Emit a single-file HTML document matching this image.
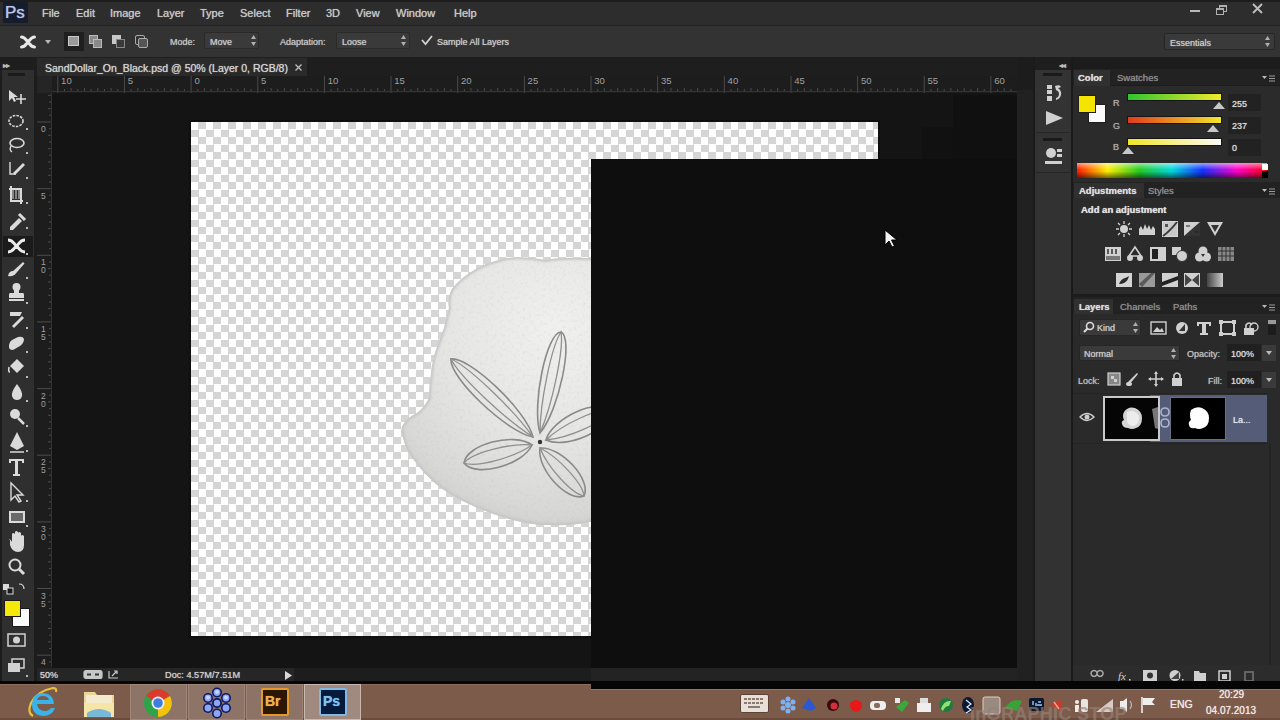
<!DOCTYPE html>
<html><head><meta charset="utf-8">
<style>
*{margin:0;padding:0;box-sizing:border-box}
html,body{width:1280px;height:720px;overflow:hidden;background:#1c1c1c;font-family:"Liberation Sans",sans-serif;color:#c4c4c4}
.a{position:absolute}
.t{position:absolute;white-space:nowrap;font-size:11px;line-height:12px;text-shadow:0 0 0.8px currentColor}
#wrap{position:absolute;left:0;top:0;width:1280px;height:720px;overflow:hidden}
</style></head><body><div id="wrap">
<!-- menu bar -->
<div class="a" style="left:0;top:0;width:1280px;height:2px;background:#1d1d1d"></div>
<div class="a" id="menubar" style="left:0;top:2px;width:1280px;height:23px;background:#2d2d2d"></div>
<div class="a" style="left:0;top:25px;width:1280px;height:1px;background:#232323"></div>
<!-- options bar -->
<div class="a" id="optbar" style="left:0;top:26px;width:1280px;height:31px;background:#333333"></div>

<!-- PS logo and menu -->
<div class="a" style="left:3px;top:2px;width:25px;height:21px;background:#151c2c"></div>
<div class="t" style="left:5px;top:3px;font-size:17px;line-height:19px;color:#b4c4ec;letter-spacing:0px">Ps</div>
<div class="t" style="left:42px;top:7px;font-size:11px;color:#c6c6c6">File</div>
<div class="t" style="left:76px;top:7px;font-size:11px;color:#c6c6c6">Edit</div>
<div class="t" style="left:110px;top:7px;font-size:11px;color:#c6c6c6">Image</div>
<div class="t" style="left:157px;top:7px;font-size:11px;color:#c6c6c6">Layer</div>
<div class="t" style="left:200px;top:7px;font-size:11px;color:#c6c6c6">Type</div>
<div class="t" style="left:240px;top:7px;font-size:11px;color:#c6c6c6">Select</div>
<div class="t" style="left:286px;top:7px;font-size:11px;color:#c6c6c6">Filter</div>
<div class="t" style="left:326px;top:7px;font-size:11px;color:#c6c6c6">3D</div>
<div class="t" style="left:356px;top:7px;font-size:11px;color:#c6c6c6">View</div>
<div class="t" style="left:396px;top:7px;font-size:11px;color:#c6c6c6">Window</div>
<div class="t" style="left:454px;top:7px;font-size:11px;color:#c6c6c6">Help</div>
<!-- window controls -->
<div class="a" style="left:1190px;top:10px;width:10px;height:2px;background:#b8b8b8"></div>
<div class="a" style="left:1219px;top:5px;width:8px;height:7px;border:1px solid #b0b0b0;border-top-width:2px"></div>
<div class="a" style="left:1216px;top:8px;width:8px;height:7px;border:1px solid #b0b0b0;border-top-width:2px;background:#2d2d2d"></div>
<svg class="a" style="left:1252px;top:3px" width="11" height="11"><path d="M1 1L10 10M10 1L1 10" stroke="#bdbdbd" stroke-width="1.9"/></svg>

<!-- options bar content -->
<svg class="a" style="left:19px;top:34px" width="18" height="16" viewBox="0 0 18 16"><path d="M2.5 3 C6 3 7 6 9 8 C11 10 12 13 15.5 13 M2.5 13 C6 13 7 10 9 8 C11 6 12 3 15.5 3" stroke="#e8e8e8" stroke-width="3" fill="none" stroke-linecap="round"/></svg>
<svg class="a" style="left:45px;top:40px" width="6" height="4"><path d="M0 0H6L3 4Z" fill="#b8b8b8"/></svg>

<div class="a" style="left:64px;top:32px;width:20px;height:19px;background:#1f1f1f"></div>
<div class="a" style="left:68px;top:36px;width:11px;height:10px;background:#9a9a9a;border:1px solid #c8c8c8"></div>
<div class="a" style="left:89px;top:35px;width:9px;height:9px;background:#8a8a8a;border:1px solid #bbb"></div>
<div class="a" style="left:93px;top:39px;width:9px;height:9px;background:#8a8a8a;border:1px solid #bbb"></div>
<div class="a" style="left:112px;top:35px;width:9px;height:9px;background:#c8c8c8"></div>
<div class="a" style="left:116px;top:39px;width:9px;height:9px;background:#3a3a3a;border:1px solid #888"></div>
<div class="a" style="left:135px;top:35px;width:10px;height:10px;border:1px solid #aaa;border-radius:2px"></div>
<div class="a" style="left:138px;top:38px;width:10px;height:10px;border:1px solid #aaa;border-radius:2px;background:#555"></div>

<div class="t" style="left:170px;top:36px;font-size:9px;color:#c2c2c2">Mode:</div>
<div class="a" style="left:204px;top:32px;width:55px;height:17px;background:#3a3a3a;border:1px solid #2a2a2a;border-radius:2px"></div>
<div class="t" style="left:210px;top:36px;font-size:9px;color:#c8c8c8">Move</div>
<svg class="a" style="left:251px;top:35px" width="5" height="11"><path d="M0 4L2.5 0L5 4ZM0 7L2.5 11L5 7Z" fill="#b0b0b0"/></svg>

<div class="t" style="left:280px;top:36px;font-size:9px;color:#c2c2c2">Adaptation:</div>
<div class="a" style="left:336px;top:32px;width:74px;height:17px;background:#3a3a3a;border:1px solid #2a2a2a;border-radius:2px"></div>
<div class="t" style="left:342px;top:36px;font-size:9px;color:#c8c8c8">Loose</div>
<svg class="a" style="left:401px;top:35px" width="5" height="11"><path d="M0 4L2.5 0L5 4ZM0 7L2.5 11L5 7Z" fill="#b0b0b0"/></svg>
<svg class="a" style="left:421px;top:35px" width="12" height="11"><path d="M1 5L4.5 9L11 1" stroke="#d0d0d0" stroke-width="1.8" fill="none"/></svg>
<div class="t" style="left:437px;top:36px;font-size:9px;color:#c8c8c8">Sample All Layers</div>
<div class="a" style="left:1164px;top:33px;width:111px;height:17px;background:#3a3a3a;border:1px solid #262626;border-radius:2px"></div>
<div class="t" style="left:1170px;top:37px;font-size:9px;color:#c8c8c8">Essentials</div>
<svg class="a" style="left:1265px;top:36px" width="5" height="11"><path d="M0 4L2.5 0L5 4ZM0 7L2.5 11L5 7Z" fill="#b0b0b0"/></svg>
<!-- tab row -->
<div class="a" style="left:0;top:57px;width:1280px;height:19px;background:#1e1e1e"></div>
<!-- left toolbar -->
<div class="a" id="toolbar" style="left:2px;top:70px;width:32px;height:612px;background:#2f2f2f"></div>

<svg class="a" style="left:0;top:60px" width="36" height="622" viewBox="0 60 36 622">
<g fill="#dadada" stroke="#dadada">
<rect x="8" y="73" width="17" height="3" fill="#1c1c1c" stroke="none"/>
<!-- move -->
<path d="M9 90L9 101L12 98L14 102L16 101L14 97L18 97Z" stroke="none"/>
<path d="M21 94V104M16 99H26" stroke-width="1.6" fill="none"/>
<!-- marquee -->
<ellipse cx="16" cy="121" rx="7" ry="5.5" fill="none" stroke-width="1.6" stroke-dasharray="2.5 1.2"/>
<!-- lasso -->
<ellipse cx="17" cy="143" rx="7" ry="4.5" fill="none" stroke-width="1.6"/>
<path d="M11 146 Q9 150 12 152" fill="none" stroke-width="1.4"/>
<!-- quick selection -->
<path d="M10 162V174H16" fill="none" stroke-width="1.4"/>
<path d="M13 173L23 163L25 165L15 175Z" stroke="none"/>
<!-- crop -->
<path d="M11 186V201H23M9 189H21V204" fill="none" stroke-width="2"/>
<path d="M13 188V199M16 188V199M19 188V199" stroke-width="1" fill="none"/>
<!-- eyedropper -->
<path d="M10 227L19 218L22 221L13 230L10 230Z" stroke="none"/>
<path d="M19 214L25 220" stroke-width="3"/>
</g>
<rect x="3" y="236" width="30" height="21" fill="#1b1b1b"/>
<g fill="#dadada" stroke="#dadada">
<!-- content aware move selected -->
<path d="M8 240 C13 240 14 244 16.5 246 C19 248 20 252 25 252 M8 252 C13 252 14 248 16.5 246 C19 244 20 240 25 240" stroke="#ececec" stroke-width="3" fill="none"/>
<!-- brush -->
<path d="M12 272L23 262L24.5 263.5L14.5 275Z" stroke="none"/>
<path d="M8 276Q9 271 13 271L15 274Q13 277 8 276Z" stroke="none"/>
<!-- stamp -->
<circle cx="16.5" cy="287" r="4" stroke="none"/><path d="M14 289H19V293H23Q24 293 24 295V298H9V295Q9 293 10 293H14Z" stroke="none"/>
<rect x="9" y="299" width="15" height="2" stroke="none"/>
<!-- history brush -->
<path d="M10 312H22L20 316H10Z" stroke="none"/>
<path d="M12 326L22 316L24 318L14 328Z" stroke="none"/>
<!-- eraser -->
<path d="M9 345Q9 342 12 340L18 337Q23 336 24 339Q24 343 20 346L13 350Q9 350 9 347Z" stroke="none"/>
<!-- bucket -->
<path d="M10 366L17 359L24 366L17 373Z" stroke="none"/>
<path d="M9 367 Q8 372 10 372" stroke-width="1.5" fill="none"/>
<!-- blur -->
<path d="M17 384 Q23 392 22 396 Q21 400 17 400 Q13 400 12 396 Q11 392 17 384Z" stroke="none"/>
<!-- dodge -->
<circle cx="15" cy="414" r="5" stroke="none"/>
<path d="M18 418L24 424" stroke-width="2.5"/>
<!-- pen -->
<path d="M17 432L24 446L17 450L10 446Z" stroke="none"/>
<path d="M10 452H24" stroke-width="1.5"/>
<!-- type -->
<path d="M9 459H24V463H22V461H18V474H20V476H13V474H15V461H11V463H9Z" stroke="none"/>
<!-- path selection -->
<path d="M11 483V500L15 496L19 502L21 501L17 495L23 495Z" fill="none" stroke-width="1.4"/>
<!-- rectangle -->
<rect x="9" y="511" width="16" height="12" stroke="none"/>
<rect x="11" y="513" width="12" height="8" fill="#6a6a6a" stroke="none"/>
<!-- hand -->
<path d="M10 540V545Q12 552 18 552Q24 552 24 545V536Q22 534 21 536V540V533Q19 531 18 533V540V532Q16 530 15 532V540V534Q13 532 12 534V542Q10 538 9 540Z" stroke="none"/>
<!-- zoom -->
<circle cx="15" cy="565" r="5.5" fill="none" stroke-width="2"/>
<path d="M19 569L24 574" stroke-width="3"/>
<!-- default colors -->
<rect x="3" y="584" width="6" height="6" stroke="none"/><rect x="7" y="588" width="6" height="6" fill="#1a1a1a" stroke="#dadada" stroke-width="1"/>
<path d="M19 584Q24 584 24 589" fill="none" stroke-width="1.2"/>
</g>
<g fill="#bbb">
<rect x="26" y="128" width="2" height="2"/><rect x="26" y="152" width="2" height="2"/><rect x="26" y="177" width="2" height="2"/>
<rect x="26" y="202" width="2" height="2"/><rect x="26" y="227" width="2" height="2"/><rect x="26" y="253" width="2" height="2"/>
<rect x="26" y="277" width="2" height="2"/><rect x="26" y="302" width="2" height="2"/><rect x="26" y="327" width="2" height="2"/>
<rect x="26" y="351" width="2" height="2"/><rect x="26" y="376" width="2" height="2"/><rect x="26" y="400" width="2" height="2"/>
<rect x="26" y="425" width="2" height="2"/><rect x="26" y="450" width="2" height="2"/><rect x="26" y="500" width="2" height="2"/>
<rect x="26" y="525" width="2" height="2"/><rect x="26" y="675" width="2" height="2"/>
</g>
<!-- fg/bg -->
<rect x="12.5" y="608.5" width="17" height="18" fill="#fafafa" stroke="#1a1a1a"/>
<rect x="4.5" y="600.5" width="16" height="16" fill="#f7e80c" stroke="#1a1a1a"/>
<!-- quick mask -->
<rect x="8" y="634" width="17" height="12" fill="none" stroke="#d2d2d2" stroke-width="1.5"/>
<circle cx="16.5" cy="640" r="3.5" fill="#d2d2d2"/>
<!-- screen mode -->
<rect x="12" y="659" width="12" height="9" fill="none" stroke="#d2d2d2" stroke-width="1.5"/>
<rect x="8" y="663" width="12" height="9" fill="#d2d2d2"/>
</svg>
<!-- document tab -->
<div class="a" style="left:37px;top:58px;width:270px;height:18px;background:#2a2a2a"></div>
<!-- rulers -->
<div class="a" id="hruler" style="left:37px;top:76px;width:980px;height:17px;background:#1d1d1d"></div>
<div class="a" id="vruler" style="left:37px;top:76px;width:15px;height:592px;background:#1d1d1d"></div>

<div class="t" style="left:45px;top:62px;font-size:10.5px;color:#d0d0d0">SandDollar_On_Black.psd @ 50% (Layer 0, RGB/8)</div>
<svg class="a" style="left:295px;top:64px" width="7" height="7"><path d="M0.5 0.5L6.5 6.5M6.5 0.5L0.5 6.5" stroke="#bdbdbd" stroke-width="1.3"/></svg>
<div class="t" style="left:3px;top:60px;font-size:8px;color:#bbb;letter-spacing:-1px">&#9656;&#9656;</div>
<div class="t" style="left:1059px;top:60px;font-size:8px;color:#bbb;letter-spacing:-1px">&#9666;&#9666;</div>
<div class="t" style="left:1268px;top:60px;font-size:8px;color:#bbb;letter-spacing:-1px">&#9656;&#9656;</div>
<svg class="a" id="hrul" style="left:0;top:76px" width="1018" height="17"><g stroke="#4a4a4a" stroke-width="1" fill="none"><path d="M57.8 0V17" /><path d="M64.5 13V16" /><path d="M71.1 12V16" /><path d="M77.8 13V16" /><path d="M84.5 12V16" /><path d="M91.1 13V16" /><path d="M97.8 12V16" /><path d="M104.5 13V16" /><path d="M111.1 12V16" /><path d="M117.8 13V16" /><path d="M124.4 0V17" /><path d="M131.1 13V16" /><path d="M137.8 12V16" /><path d="M144.4 13V16" /><path d="M151.1 12V16" /><path d="M157.8 13V16" /><path d="M164.4 12V16" /><path d="M171.1 13V16" /><path d="M177.8 12V16" /><path d="M184.4 13V16" /><path d="M191.1 0V17" /><path d="M197.8 13V16" /><path d="M204.4 12V16" /><path d="M211.1 13V16" /><path d="M217.8 12V16" /><path d="M224.4 13V16" /><path d="M231.1 12V16" /><path d="M237.8 13V16" /><path d="M244.4 12V16" /><path d="M251.1 13V16" /><path d="M257.8 0V17" /><path d="M264.4 13V16" /><path d="M271.1 12V16" /><path d="M277.7 13V16" /><path d="M284.4 12V16" /><path d="M291.1 13V16" /><path d="M297.7 12V16" /><path d="M304.4 13V16" /><path d="M311.1 12V16" /><path d="M317.7 13V16" /><path d="M324.4 0V17" /><path d="M331.1 13V16" /><path d="M337.7 12V16" /><path d="M344.4 13V16" /><path d="M351.1 12V16" /><path d="M357.7 13V16" /><path d="M364.4 12V16" /><path d="M371.1 13V16" /><path d="M377.7 12V16" /><path d="M384.4 13V16" /><path d="M391.0 0V17" /><path d="M397.7 13V16" /><path d="M404.4 12V16" /><path d="M411.0 13V16" /><path d="M417.7 12V16" /><path d="M424.4 13V16" /><path d="M431.0 12V16" /><path d="M437.7 13V16" /><path d="M444.4 12V16" /><path d="M451.0 13V16" /><path d="M457.7 0V17" /><path d="M464.4 13V16" /><path d="M471.0 12V16" /><path d="M477.7 13V16" /><path d="M484.4 12V16" /><path d="M491.0 13V16" /><path d="M497.7 12V16" /><path d="M504.4 13V16" /><path d="M511.0 12V16" /><path d="M517.7 13V16" /><path d="M524.4 0V17" /><path d="M531.0 13V16" /><path d="M537.7 12V16" /><path d="M544.3 13V16" /><path d="M551.0 12V16" /><path d="M557.7 13V16" /><path d="M564.3 12V16" /><path d="M571.0 13V16" /><path d="M577.7 12V16" /><path d="M584.3 13V16" /><path d="M591.0 0V17" /><path d="M597.7 13V16" /><path d="M604.3 12V16" /><path d="M611.0 13V16" /><path d="M617.7 12V16" /><path d="M624.3 13V16" /><path d="M631.0 12V16" /><path d="M637.7 13V16" /><path d="M644.3 12V16" /><path d="M651.0 13V16" /><path d="M657.6 0V17" /><path d="M664.3 13V16" /><path d="M671.0 12V16" /><path d="M677.6 13V16" /><path d="M684.3 12V16" /><path d="M691.0 13V16" /><path d="M697.6 12V16" /><path d="M704.3 13V16" /><path d="M711.0 12V16" /><path d="M717.6 13V16" /><path d="M724.3 0V17" /><path d="M731.0 13V16" /><path d="M737.6 12V16" /><path d="M744.3 13V16" /><path d="M751.0 12V16" /><path d="M757.6 13V16" /><path d="M764.3 12V16" /><path d="M771.0 13V16" /><path d="M777.6 12V16" /><path d="M784.3 13V16" /><path d="M791.0 0V17" /><path d="M797.6 13V16" /><path d="M804.3 12V16" /><path d="M810.9 13V16" /><path d="M817.6 12V16" /><path d="M824.3 13V16" /><path d="M830.9 12V16" /><path d="M837.6 13V16" /><path d="M844.3 12V16" /><path d="M850.9 13V16" /><path d="M857.6 0V17" /><path d="M864.3 13V16" /><path d="M870.9 12V16" /><path d="M877.6 13V16" /><path d="M884.3 12V16" /><path d="M890.9 13V16" /><path d="M897.6 12V16" /><path d="M904.3 13V16" /><path d="M910.9 12V16" /><path d="M917.6 13V16" /><path d="M924.2 0V17" /><path d="M930.9 13V16" /><path d="M937.6 12V16" /><path d="M944.2 13V16" /><path d="M950.9 12V16" /><path d="M957.6 13V16" /><path d="M964.2 12V16" /><path d="M970.9 13V16" /><path d="M977.6 12V16" /><path d="M984.2 13V16" /><path d="M990.9 0V17" /><path d="M997.6 13V16" /><path d="M1004.2 12V16" /><path d="M1010.9 13V16" /><path d="M1017.6 12V16" /></g><g fill="#a0a0a0" font-size="9.5" font-family="Liberation Sans"><text x="61.1" y="8.3">10</text><text x="127.7" y="8.3">5</text><text x="194.4" y="8.3">0</text><text x="261.1" y="8.3">5</text><text x="327.7" y="8.3">10</text><text x="394.3" y="8.3">15</text><text x="461.0" y="8.3">20</text><text x="527.6" y="8.3">25</text><text x="594.3" y="8.3">30</text><text x="660.9" y="8.3">35</text><text x="727.6" y="8.3">40</text><text x="794.2" y="8.3">45</text><text x="860.9" y="8.3">50</text><text x="927.5" y="8.3">55</text><text x="994.2" y="8.3">60</text></g><path d="M52 15.5H1018" stroke="#333"/></svg><svg class="a" id="vrul" style="left:37px;top:0" width="15" height="667"><g stroke="#4a4a4a" stroke-width="1" fill="none"><path d="M11 95.3H15" /><path d="M12 102.0H15" /><path d="M11 108.7H15" /><path d="M12 115.3H15" /><path d="M0 122.0H15" /><path d="M12 128.7H15" /><path d="M11 135.3H15" /><path d="M12 142.0H15" /><path d="M11 148.7H15" /><path d="M12 155.3H15" /><path d="M11 162.0H15" /><path d="M12 168.7H15" /><path d="M11 175.3H15" /><path d="M12 182.0H15" /><path d="M0 188.7H15" /><path d="M12 195.3H15" /><path d="M11 202.0H15" /><path d="M12 208.6H15" /><path d="M11 215.3H15" /><path d="M12 222.0H15" /><path d="M11 228.6H15" /><path d="M12 235.3H15" /><path d="M11 242.0H15" /><path d="M12 248.6H15" /><path d="M0 255.3H15" /><path d="M12 262.0H15" /><path d="M11 268.6H15" /><path d="M12 275.3H15" /><path d="M11 282.0H15" /><path d="M12 288.6H15" /><path d="M11 295.3H15" /><path d="M12 302.0H15" /><path d="M11 308.6H15" /><path d="M12 315.3H15" /><path d="M0 321.9H15" /><path d="M12 328.6H15" /><path d="M11 335.3H15" /><path d="M12 341.9H15" /><path d="M11 348.6H15" /><path d="M12 355.3H15" /><path d="M11 361.9H15" /><path d="M12 368.6H15" /><path d="M11 375.3H15" /><path d="M12 381.9H15" /><path d="M0 388.6H15" /><path d="M12 395.3H15" /><path d="M11 401.9H15" /><path d="M12 408.6H15" /><path d="M11 415.3H15" /><path d="M12 421.9H15" /><path d="M11 428.6H15" /><path d="M12 435.3H15" /><path d="M11 441.9H15" /><path d="M12 448.6H15" /><path d="M0 455.2H15" /><path d="M12 461.9H15" /><path d="M11 468.6H15" /><path d="M12 475.2H15" /><path d="M11 481.9H15" /><path d="M12 488.6H15" /><path d="M11 495.2H15" /><path d="M12 501.9H15" /><path d="M11 508.6H15" /><path d="M12 515.2H15" /><path d="M0 521.9H15" /><path d="M12 528.6H15" /><path d="M11 535.2H15" /><path d="M12 541.9H15" /><path d="M11 548.6H15" /><path d="M12 555.2H15" /><path d="M11 561.9H15" /><path d="M12 568.6H15" /><path d="M11 575.2H15" /><path d="M12 581.9H15" /><path d="M0 588.5H15" /><path d="M12 595.2H15" /><path d="M11 601.9H15" /><path d="M12 608.5H15" /><path d="M11 615.2H15" /><path d="M12 621.9H15" /><path d="M11 628.5H15" /><path d="M12 635.2H15" /><path d="M11 641.9H15" /><path d="M12 648.5H15" /><path d="M0 655.2H15" /><path d="M12 661.9H15" /></g><g fill="#a0a0a0" font-size="8.5" font-family="Liberation Sans"><text x="4" y="132.0">0</text><text x="4" y="198.7">5</text><text x="4" y="265.3">1</text><text x="4" y="273.3">0</text><text x="4" y="331.9">1</text><text x="4" y="339.9">5</text><text x="4" y="398.6">2</text><text x="4" y="406.6">0</text><text x="4" y="465.2">2</text><text x="4" y="473.2">5</text><text x="4" y="531.9">3</text><text x="4" y="539.9">0</text><text x="4" y="598.5">3</text><text x="4" y="606.5">5</text><text x="4" y="665.2">4</text><text x="4" y="673.2">0</text></g><path d="M14.5 93V668" stroke="#333"/></svg><div class="a" style="left:37px;top:76px;width:15px;height:17px;background:#252525"></div>
<!-- canvas bg -->
<div class="a" id="canvasbg" style="left:52px;top:93px;width:965px;height:575px;background:#141414"></div>
<!-- checker -->
<div class="a" id="checker" style="left:190.5px;top:122px;width:687.5px;height:514px;box-shadow:0 0 0 2px #0f0f0f;background-color:#fff;background-image:conic-gradient(#d5d5d5 25%,#fff 25% 50%,#d5d5d5 50% 75%,#fff 75%);background-size:15px 15px;background-position:0 0"></div>

<!-- sand dollar -->
<svg class="a" style="left:380px;top:240px" width="220" height="300" viewBox="380 240 220 300">
<defs>
<radialGradient id="sdg" cx="555" cy="330" r="210" gradientUnits="userSpaceOnUse">
<stop offset="0" stop-color="#f0f0ee"/><stop offset="0.5" stop-color="#e6e6e4"/><stop offset="0.85" stop-color="#d8d8d6"/><stop offset="1" stop-color="#cdcdcb"/>
</radialGradient>
<filter id="bl"><feGaussianBlur stdDeviation="0.5"/></filter><filter id="bl2"><feGaussianBlur stdDeviation="1.2"/></filter>
<filter id="tex" x="0" y="0" width="1" height="1"><feTurbulence type="fractalNoise" baseFrequency="0.35" numOctaves="2" seed="3"/><feColorMatrix values="0 0 0 0 0.45  0 0 0 0 0.45  0 0 0 0 0.44  0 0 0 -1.6 0.75"/><feComposite in2="SourceGraphic" operator="in"/><feGaussianBlur stdDeviation="0.4"/></filter>
<clipPath id="sdc"><path id="sdp" d="M600 258 L586 258 Q560 257 546 260 Q525 256 507 258 Q488 262 476 269 Q460 278 452 289 Q447 298 449 308 Q446 318 444 328 Q440 338 437 347 Q432 360 431 374 Q429 386 429 398 Q424 408 417 413 Q409 417 406 421 Q400 427 402 433 Q404 444 409 453 Q420 470 436 484 Q451 496 469 504 Q490 514 513 520 Q531 525 549 525 Q570 526 589 522 L600 520 Z"/></clipPath>
</defs>
<path d="M600 258 L586 258 Q560 257 546 260 Q525 256 507 258 Q488 262 476 269 Q460 278 452 289 Q447 298 449 308 Q446 318 444 328 Q440 338 437 347 Q432 360 431 374 Q429 386 429 398 Q424 408 417 413 Q409 417 406 421 Q400 427 402 433 Q404 444 409 453 Q420 470 436 484 Q451 496 469 504 Q490 514 513 520 Q531 525 549 525 Q570 526 589 522 L600 520 Z" fill="url(#sdg)" filter="url(#bl)"/>
<g clip-path="url(#sdc)"><rect x="380" y="240" width="220" height="300" fill="#000" filter="url(#tex)" opacity="0.3"/></g>
<g clip-path="url(#sdc)"><use href="#sdp" fill="none" stroke="#c6c6c4" stroke-width="4" filter="url(#bl2)"/></g>
<g fill="none" stroke="#8a8a88" stroke-width="1.6" filter="url(#bl)"><path d="M533.0 437.0C526.7 410.8 469.3 356.2 451.0 359.0C449.1 377.4 506.5 432.0 533.0 437.0Z"/><path d="M540.0 433.0C559.0 410.6 574.1 337.9 561.0 332.0C546.7 332.2 531.5 404.9 540.0 433.0Z"/><path d="M546.0 440.0C566.4 449.8 612.6 428.8 612.0 410.0C598.2 397.2 552.0 418.2 546.0 440.0Z"/><path d="M540.0 448.0C536.5 468.9 567.3 502.5 584.0 496.0C591.9 479.9 561.1 446.3 540.0 448.0Z"/><path d="M532.0 445.0C514.0 431.8 466.4 444.4 464.0 463.0C475.2 478.0 522.8 465.4 532.0 445.0Z"/></g>
<g fill="none" stroke="#90908e" stroke-width="1.3" filter="url(#bl)"><path d="M533.0 437.0C512.9 408.8 467.8 365.9 451.0 359.0C458.8 375.5 503.9 418.4 533.0 437.0Z"/><path d="M540.0 433.0C552.5 404.0 564.0 348.4 561.0 332.0C551.7 345.9 540.1 401.4 540.0 433.0Z"/><path d="M546.0 440.0C569.0 438.1 605.3 421.6 612.0 410.0C598.9 407.4 562.6 423.9 546.0 440.0Z"/><path d="M540.0 448.0C547.7 467.5 571.9 493.9 584.0 496.0C582.9 483.7 558.7 457.3 540.0 448.0Z"/><path d="M532.0 445.0C509.6 442.9 472.2 452.8 464.0 463.0C476.2 467.8 513.6 457.9 532.0 445.0Z"/></g>
<circle cx="540" cy="442" r="2.2" fill="#333"/>
</svg>
<div class="a" style="left:953px;top:95px;width:64px;height:64px;background:#101010"></div>
<div class="a" style="left:922px;top:127px;width:31px;height:32px;background:#111111"></div>
<!-- black layer -->
<div class="a" id="blackrect" style="left:591px;top:159px;width:427px;height:509px;background:#0e0e0e"></div>
<!-- status bar -->
<div class="a" style="left:37px;top:668px;width:980px;height:13px;background:#1d1d1d"></div>
<div class="a" style="left:37px;top:668px;width:257px;height:13px;background:#262626"></div>
<div class="a" style="left:591px;top:668px;width:426px;height:13px;background:#232323"></div>
<!-- right strips -->
<div class="a" style="left:1017px;top:57px;width:16px;height:625px;background:#1c1c1c"></div>
<div class="a" style="left:1017px;top:90px;width:16px;height:592px;background:#212121"></div>
<div class="a" style="left:1033px;top:57px;width:2px;height:625px;background:#1a1a1a"></div>
<div class="a" style="left:1035px;top:70px;width:36px;height:612px;background:#323232"></div>
<div class="a" style="left:1071px;top:57px;width:2px;height:625px;background:#1a1a1a"></div>
<div class="a" id="panels" style="left:1073px;top:57px;width:207px;height:625px;background:#1c1c1c"></div>

<!-- collapsed icon column -->
<div class="a" style="left:1036px;top:70px;width:34px;height:63px;background:#333333;border-bottom:1px solid #262626"></div>
<div class="a" style="left:1036px;top:134px;width:34px;height:39px;background:#333333;border-bottom:1px solid #262626"></div>
<div class="a" style="left:1043px;top:73px;width:19px;height:3px;background:#1a1a1a"></div>
<div class="a" style="left:1043px;top:138px;width:19px;height:3px;background:#1a1a1a"></div>
<svg class="a" style="left:1044px;top:82px" width="22" height="90">
<g fill="#d0d0d0">
<rect x="3" y="3" width="5" height="4"/><rect x="3" y="8" width="5" height="4"/><rect x="3" y="14" width="5" height="5"/>
<path d="M11 4 Q16 2 17 5 Q15 6 14 6 Q18 9 17 13 Q16 17 12 18 L12 16 Q15 15 15 12 Q15 9 12 8Z"/>
<path d="M2 29L19 36L2 43Z"/>
<circle cx="7" cy="71" r="5"/><rect x="13" y="67" width="5" height="3"/><rect x="13" y="72" width="5" height="3"/>
<rect x="1" y="79" width="17" height="3"/>
</g>
</svg>

<!-- COLOR panel -->
<div class="a" style="left:1073px;top:69px;width:207px;height:16px;background:#222222"></div>
<div class="a" style="left:1074px;top:70px;width:36px;height:16px;background:#303030"></div>
<div class="t" style="left:1078px;top:72px;font-size:9.5px;color:#dcdcdc;font-weight:bold">Color</div>
<div class="t" style="left:1117px;top:72px;font-size:9.5px;color:#8c8c8c">Swatches</div>
<svg class="a" style="left:1262px;top:75px" width="14" height="8"><path d="M0 1H5L2.5 4Z" fill="#bbb"/><path d="M7 1H13M7 3.5H13M7 6H13" stroke="#999" stroke-width="1.2"/></svg>
<div class="a" style="left:1073px;top:86px;width:207px;height:96px;background:#2b2b2b"></div>
<div class="a" style="left:1088px;top:104px;width:18px;height:19px;background:#fafafa;border:1px solid #1e1e1e"></div>
<div class="a" style="left:1078px;top:95px;width:18px;height:18px;background:#f5e300;border:1px solid #1e1e1e"></div>
<div class="t" style="left:1113px;top:97px;font-size:9px;color:#a8a8a8">R</div>
<div class="t" style="left:1113px;top:120px;font-size:9px;color:#a8a8a8">G</div>
<div class="t" style="left:1113px;top:141px;font-size:9px;color:#a8a8a8">B</div>
<div class="a" style="left:1127px;top:93px;width:95px;height:8px;background:linear-gradient(90deg,#2fc52f,#f2ea29);border:1px solid #151515"></div>
<div class="a" style="left:1127px;top:116px;width:95px;height:8px;background:linear-gradient(90deg,#e23b1c,#f3e62a);border:1px solid #151515"></div>
<div class="a" style="left:1127px;top:138px;width:95px;height:8px;background:linear-gradient(90deg,#f2e623,#fbfbf8);border:1px solid #151515"></div>
<svg class="a" style="left:1213px;top:102px" width="12" height="7"><path d="M0 7L6 0L12 7Z" fill="#c8c8c8"/></svg>
<svg class="a" style="left:1207px;top:125px" width="12" height="7"><path d="M0 7L6 0L12 7Z" fill="#c8c8c8"/></svg>
<svg class="a" style="left:1122px;top:147px" width="12" height="7"><path d="M0 7L6 0L12 7Z" fill="#c8c8c8"/></svg>
<div class="a" style="left:1228px;top:94px;width:33px;height:17px;background:#222"></div>
<div class="a" style="left:1228px;top:117px;width:33px;height:17px;background:#222"></div>
<div class="a" style="left:1228px;top:139px;width:33px;height:17px;background:#222"></div>
<div class="t" style="left:1232px;top:98px;font-size:9px;color:#d8d8d8">255</div>
<div class="t" style="left:1232px;top:120px;font-size:9px;color:#d8d8d8">237</div>
<div class="t" style="left:1232px;top:142px;font-size:9px;color:#d8d8d8">0</div>
<div class="a" style="left:1077px;top:163px;width:190px;height:15px;background:linear-gradient(180deg,rgba(255,255,255,.55),rgba(255,255,255,0) 45%,rgba(0,0,0,0) 55%,rgba(0,0,0,.55)),linear-gradient(90deg,#ff1a00,#ffee00 16%,#22cc22 33%,#00d8e0 50%,#1530ff 66%,#ff00cc 84%,#ff0010 100%)"></div>
<div class="a" style="left:1262px;top:164px;width:6px;height:6px;background:#fff"></div>
<div class="a" style="left:1262px;top:171px;width:6px;height:7px;background:#000"></div>
<!-- ADJUSTMENTS panel -->
<div class="a" style="left:1073px;top:182px;width:207px;height:16px;background:#222222"></div>
<div class="a" style="left:1074px;top:183px;width:70px;height:15px;background:#303030"></div>
<div class="t" style="left:1079px;top:185px;font-size:9.5px;color:#dcdcdc;font-weight:bold">Adjustments</div>
<div class="t" style="left:1148px;top:185px;font-size:9.5px;color:#8c8c8c">Styles</div>
<svg class="a" style="left:1262px;top:188px" width="14" height="8"><path d="M0 1H5L2.5 4Z" fill="#bbb"/><path d="M7 1H13M7 3.5H13M7 6H13" stroke="#999" stroke-width="1.2"/></svg>
<div class="a" style="left:1073px;top:198px;width:207px;height:96px;background:#2b2b2b"></div>
<div class="t" style="left:1081px;top:204px;font-size:9.5px;color:#e0e0e0;font-weight:bold">Add an adjustment</div>
<svg class="a" style="left:0;top:0" width="1280" height="300"><defs><linearGradient id="sg"><stop offset="0" stop-color="#444"/><stop offset="1" stop-color="#ccc"/></linearGradient></defs><g transform="translate(1116,221)"><circle cx="8" cy="8" r="4" fill="#d0d0d0"/><path d="M8 0V3M8 13V16M0 8H3M13 8H16M2 2L4 4M12 12L14 14M2 14L4 12M12 4L14 2" stroke="#d0d0d0" stroke-width="1.3"/></g><g transform="translate(1139,221)"><path d="M0 14V8L2 5L4 9L6 3L8 8L10 4L12 9L14 5L16 8V14Z" fill="#d0d0d0"/></g><g transform="translate(1162,221)"><rect x="0.5" y="0.5" width="15" height="15" fill="#c8c8c8" stroke="#d8d8d8"/><path d="M1 15Q8 10 15 1" stroke="#3a3a3a" stroke-width="2" fill="none"/><rect x="3" y="3" width="3" height="3" fill="#555"/></g><g transform="translate(1184,221)"><rect x="0" y="1" width="16" height="14" fill="#d0d0d0"/><path d="M0 15L16 1V15Z" fill="#333"/><path d="M2 5H6M11 11H15" stroke="#222" stroke-width="1.2"/></g><g transform="translate(1207,221)"><path d="M0 1H16L8 15Z" fill="#d0d0d0"/><path d="M4 4H12L8 11Z" fill="#333"/></g><g transform="translate(1105,246)"><rect x="0" y="1" width="16" height="14" fill="#d0d0d0"/><path d="M1 10H15V14H1Z" fill="#777"/><path d="M3 3V8M7 3V8M11 3V8" stroke="#333" stroke-width="1.5"/></g><g transform="translate(1127,246)"><path d="M8 1L14 10H2Z" fill="none" stroke="#d0d0d0" stroke-width="1.6"/><circle cx="3" cy="12" r="3" fill="#d0d0d0"/><circle cx="13" cy="12" r="3" fill="#d0d0d0"/></g><g transform="translate(1150,246)"><rect x="0.5" y="1.5" width="15" height="13" fill="#d0d0d0" stroke="#d0d0d0"/><rect x="2" y="3" width="6" height="10" fill="#222"/></g><g transform="translate(1172,246)"><rect x="0" y="1" width="9" height="8" fill="#d0d0d0"/><circle cx="10" cy="10" r="5.5" fill="#d0d0d0" stroke="#333" stroke-width="1"/></g><g transform="translate(1195,246)"><circle cx="8" cy="5" r="4.5" fill="#d0d0d0"/><circle cx="4.5" cy="11" r="4.5" fill="#d0d0d0"/><circle cx="11.5" cy="11" r="4.5" fill="#d0d0d0"/><path d="M6 8L10 8L8 11Z" fill="#333"/></g><g transform="translate(1218,246)"><rect x="0" y="1" width="16" height="14" fill="#888"/><path d="M4 1V15M8 1V15M12 1V15M0 5H16M0 10H16" stroke="#333" stroke-width="1"/></g><g transform="translate(1116,272)"><rect x="0" y="1" width="16" height="14" fill="#d4d4d4"/><path d="M3 12Q5 7 9 6Q12 5 13 4Q12 9 8 11Q6 12 3 12Z" fill="#2a2a2a"/></g><g transform="translate(1139,272)"><rect x="0" y="1" width="16" height="14" fill="#9a9a9a"/><path d="M0 12L12 1H16L3 15Z" fill="#5a5a5a"/></g><g transform="translate(1162,272)"><rect x="0" y="1" width="16" height="14" fill="#d0d0d0"/><path d="M0 10L16 4V8L0 14Z" fill="#222"/></g><g transform="translate(1184,272)"><rect x="0" y="1" width="16" height="14" fill="#d0d0d0"/><path d="M1 2L8 8L1 14ZM15 2L8 8L15 14Z" fill="#444"/></g><g transform="translate(1207,272)"><rect x="0" y="1" width="16" height="14" fill="url(#sg)"/></g></svg>
<!-- LAYERS panel -->
<div class="a" style="left:1073px;top:297px;width:207px;height:17px;background:#222222"></div>
<div class="a" style="left:1074px;top:299px;width:39px;height:15px;background:#303030"></div>
<div class="t" style="left:1079px;top:301px;font-size:9.5px;color:#dcdcdc;font-weight:bold">Layers</div>
<div class="t" style="left:1120px;top:301px;font-size:9.5px;color:#8c8c8c">Channels</div>
<div class="t" style="left:1173px;top:301px;font-size:9.5px;color:#8c8c8c">Paths</div>
<svg class="a" style="left:1262px;top:304px" width="14" height="8"><path d="M0 1H5L2.5 4Z" fill="#bbb"/><path d="M7 1H13M7 3.5H13M7 6H13" stroke="#999" stroke-width="1.2"/></svg>
<div class="a" style="left:1073px;top:314px;width:207px;height:353px;background:#2a2a2a"></div>
<!-- filter row -->
<div class="a" style="left:1079px;top:319px;width:62px;height:17px;background:#3a3a3a;border:1px solid #262626;border-radius:2px"></div>
<svg class="a" style="left:1083px;top:321px" width="12" height="12"><circle cx="7" cy="5" r="3.5" fill="none" stroke="#ddd" stroke-width="1.6"/><path d="M4.5 7.5L1 11" stroke="#ddd" stroke-width="2"/></svg>
<div class="t" style="left:1097px;top:322px;font-size:9px;color:#c8c8c8">Kind</div>
<svg class="a" style="left:1133px;top:322px" width="5" height="11"><path d="M0 4L2.5 0L5 4ZM0 7L2.5 11L5 7Z" fill="#b0b0b0"/></svg>
<svg class="a" style="left:1150px;top:319px" width="130" height="18">
<g fill="#d0d0d0">
<rect x="1" y="3" width="15" height="12" fill="none" stroke="#d0d0d0" stroke-width="1.4"/><path d="M3 13L7 8L10 11L12 9L14 13Z"/>
<circle cx="32" cy="9" r="6"/><path d="M29 12L35 5V12Z" fill="#333"/>
<path d="M47 3H61V7H59V5H56V14H58V16H50V14H52V5H49V7H47Z"/>
<rect x="71" y="3" width="13" height="12" fill="none" stroke="#d0d0d0" stroke-width="2"/><rect x="69" y="1" width="4" height="4"/><rect x="82" y="1" width="4" height="4"/><rect x="69" y="13" width="4" height="4"/><rect x="82" y="13" width="4" height="4"/>
<path d="M94 9V16H104V9Z"/><path d="M96 9V6Q99 2 102 6" fill="none" stroke="#d0d0d0" stroke-width="1.6"/><circle cx="104" cy="8" r="4" fill="none" stroke="#d0d0d0" stroke-width="1.4"/>
<rect x="118" y="1" width="8" height="4" fill="#999"/><rect x="118" y="6" width="8" height="10" fill="#1c1c1c"/>
</g></svg>
<!-- blend row -->
<div class="a" style="left:1079px;top:345px;width:101px;height:16px;background:#3a3a3a;border:1px solid #262626;border-radius:2px"></div>
<div class="t" style="left:1084px;top:348px;font-size:9px;color:#c8c8c8">Normal</div>
<svg class="a" style="left:1171px;top:348px" width="5" height="11"><path d="M0 4L2.5 0L5 4ZM0 7L2.5 11L5 7Z" fill="#b0b0b0"/></svg>
<div class="t" style="left:1187px;top:348px;font-size:9px;color:#bcbcbc">Opacity:</div>
<div class="a" style="left:1227px;top:344px;width:34px;height:17px;background:#202020"></div>
<div class="t" style="left:1231px;top:348px;font-size:9px;color:#d8d8d8">100%</div>
<div class="a" style="left:1262px;top:345px;width:14px;height:16px;background:#3a3a3a"></div>
<svg class="a" style="left:1266px;top:351px" width="6" height="4"><path d="M0 0H6L3 4Z" fill="#bbb"/></svg>
<!-- lock row -->
<div class="t" style="left:1078px;top:375px;font-size:9px;color:#bcbcbc">Lock:</div>
<svg class="a" style="left:1106px;top:370px" width="80" height="18">
<g fill="#d0d0d0">
<rect x="2" y="3" width="12" height="12" fill="#888" stroke="#d0d0d0" stroke-width="1.2"/><rect x="5" y="6" width="3" height="3"/><rect x="8" y="9" width="3" height="3"/>
<path d="M23 15Q21 16 21 13L31 3L32 4Z"/><ellipse cx="23" cy="14" rx="3" ry="2"/>
<path d="M50 2V16M43 9H57" stroke="#d0d0d0" stroke-width="1.6"/><path d="M50 1L48 4H52ZM50 17L48 14H52ZM42 9L45 7V11ZM58 9L55 7V11Z"/>
<rect x="66" y="8" width="10" height="8"/><path d="M68 8V5Q71 1 74 5V8" fill="none" stroke="#d0d0d0" stroke-width="1.6"/>
</g></svg>
<div class="t" style="left:1208px;top:375px;font-size:9px;color:#bcbcbc">Fill:</div>
<div class="a" style="left:1227px;top:371px;width:34px;height:17px;background:#202020"></div>
<div class="t" style="left:1231px;top:375px;font-size:9px;color:#d8d8d8">100%</div>
<div class="a" style="left:1262px;top:372px;width:14px;height:16px;background:#3a3a3a"></div>
<svg class="a" style="left:1266px;top:378px" width="6" height="4"><path d="M0 0H6L3 4Z" fill="#bbb"/></svg>
<!-- layer row -->
<div class="a" style="left:1073px;top:393px;width:197px;height:1px;background:#242424"></div>
<div class="a" style="left:1150px;top:395px;width:117px;height:47px;background:#545c77"></div>
<div class="a" style="left:1073px;top:443px;width:197px;height:1px;background:#242424"></div>
<svg class="a" style="left:1079px;top:411px" width="16" height="12"><path d="M1 6Q8 -1 15 6Q8 13 1 6Z" fill="none" stroke="#ccc" stroke-width="1.4"/><circle cx="8" cy="6" r="2.5" fill="#ccc"/></svg>
<div class="a" style="left:1103px;top:396px;width:57px;height:45px;background:#050505;border:2px solid #c9c9c9"></div>
<svg class="a" style="left:1105px;top:398px" width="53" height="41"><path d="M19 14Q23 8 30 10Q37 13 37 20Q37 28 31 30Q27 32 23 30Q18 30 17 26Q16 23 19 22Q17 18 19 14Z" fill="#d4d4d4"/><path d="M22 14Q30 11 34 18Q35 25 29 28Q24 28 22 24Z" fill="#ececec"/><path d="M47 11L53 9V31L50 30Z" fill="#777"/></svg>
<svg class="a" style="left:1160px;top:407px" width="10" height="22"><path d="M5 1Q9 1 9 5Q9 9 5 9Q1 9 1 5Q1 1 5 1ZM5 12Q9 12 9 16Q9 20 5 20Q1 20 1 16Q1 12 5 12Z" fill="none" stroke="#a8b4d8" stroke-width="1.6"/></svg>
<div class="a" style="left:1170px;top:397px;width:56px;height:43px;background:#000;border:1px solid #6a6f80"></div>
<svg class="a" style="left:1171px;top:398px" width="54" height="41"><path d="M20 12Q25 8 31 10Q38 13 38 20Q38 28 32 30Q28 32 24 30Q19 31 18 27Q17 24 20 22Q18 17 20 12Z" fill="#fff"/></svg>
<div class="t" style="left:1233px;top:414px;font-size:9px;color:#dfe3ee">La...</div>
<!-- layers bottom -->
<div class="a" style="left:1073px;top:665px;width:207px;height:17px;background:#2c2c2c"></div>
<div class="a" style="left:1269px;top:444px;width:2px;height:221px;background:#232323"></div>
<svg class="a" style="left:1086px;top:668px" width="180" height="15">
<g fill="#d0d0d0">
<path d="M8 8.5a3 3 0 1 1 0.1 0M14 8.5a3 3 0 1 1 0.1 0" fill="none" stroke="#aaa" stroke-width="1.5"/>
<text x="32" y="12" font-size="11" font-style="italic" font-family="Liberation Serif" fill="#d0d0d0">fx</text><rect x="43" y="11" width="1.5" height="1.5"/>
<rect x="57" y="2" width="14" height="11"/><circle cx="64" cy="7.5" r="3" fill="#333"/>
<circle cx="89" cy="7.5" r="5.5"/><path d="M85 11L93 4V11Z" fill="#444"/><rect x="96" y="11" width="1.5" height="1.5"/>
<path d="M108 3H113L114 5H120V13H108Z"/>
<rect x="133" y="3" width="11" height="10" fill="none" stroke="#d0d0d0" stroke-width="1.5"/><rect x="136" y="6" width="5" height="5"/>
<path d="M158 4H168M159 5V13H167V5" fill="none" stroke="#777" stroke-width="1.5"/>
</g></svg>
<!-- bottom black and taskbar -->
<div class="a" style="left:0;top:681px;width:1280px;height:8px;background:#060606"></div>
<div class="a" id="taskbar" style="left:0;top:684px;width:591px;height:36px;background:#7c5b4b"></div>
<div class="a" id="taskbar2" style="left:591px;top:689px;width:689px;height:31px;background:#7c5b4b"></div>
<div class="a" style="left:0;top:684px;width:591px;height:1px;background:#8d6d5d"></div>
<div class="a" style="left:591px;top:689px;width:689px;height:1px;background:#92766a"></div>
<div class="a" style="left:0;top:718px;width:1280px;height:2px;background:#6a4b3c"></div>

<!-- status bar content -->
<div class="t" style="left:40px;top:669px;font-size:9px;color:#d2d2d2">50%</div>
<svg class="a" style="left:83px;top:669px" width="40" height="11"><rect x="1" y="1.5" width="18" height="8" rx="2" fill="#c8c8c8" stroke="#c8c8c8" stroke-width="1.2"/><path d="M4 5.5H8M12 5.5H16" stroke="#333" stroke-width="2"/><path d="M26 2V9H35" fill="none" stroke="#c8c8c8" stroke-width="1.2"/><path d="M29 7L34 2M31 2H34V5" fill="none" stroke="#c8c8c8" stroke-width="1.2"/></svg>
<div class="t" style="left:165px;top:669px;font-size:9.2px;color:#cccccc">Doc: 4.57M/7.51M</div>
<svg class="a" style="left:285px;top:671px" width="7" height="9"><path d="M0 0L7 4.5L0 9Z" fill="#d8d8d8"/></svg>

<!-- taskbar buttons -->
<div class="a" style="left:130px;top:684px;width:57px;height:36px;background:#8e7466;border:1px solid #9e8678"></div>
<div class="a" style="left:188px;top:684px;width:57px;height:36px;background:#8e7466;border:1px solid #9e8678"></div>
<div class="a" style="left:246px;top:684px;width:57px;height:36px;background:#8d7365;border:1px solid #9d8477"></div>
<div class="a" style="left:304px;top:684px;width:57px;height:36px;background:#a08a7f;border:1px solid #c8b8b0"></div>
<!-- IE -->
<svg class="a" style="left:25px;top:685px" width="34" height="34">
<path d="M8 31 Q2 28 6 18 Q12 6 28 3 Q32 3 31 7" fill="none" stroke="#e8c040" stroke-width="2.2"/>
<path d="M17 8 Q28 8 29 19 L12 19 Q13 26 20 26 Q24 26 26 23 L30 23 Q27 31 18 31 Q7 30 7 19 Q8 8 17 8Z M12 15 L24 15 Q23 11 18 11 Q13 11 12 15Z" fill="#3ab4e8"/>
</svg>
<!-- folder -->
<svg class="a" style="left:83px;top:689px" width="33" height="30">
<path d="M1 3H12L14 6H31V27H1Z" fill="#e9d79a"/>
<rect x="3" y="6" width="26" height="8" fill="#f3ead0"/>
<path d="M1 14H31V28H1Z" fill="#f5e6a8"/>
<path d="M4 24Q16 16 28 24V28H4Z" fill="#7ab8d8"/>
</svg>
<!-- chrome -->
<svg class="a" style="left:143px;top:688px" width="30" height="30" viewBox="0 0 30 30">
<circle cx="15" cy="15" r="14" fill="#2fa34a"/>
<path d="M15 15 L3 8 A14 14 0 0 1 27 8 Z" fill="#dd3a2e"/>
<path d="M15 15 L27 8 A14 14 0 0 1 15 29 Z" fill="#f4c20d"/>
<circle cx="15" cy="15" r="6.5" fill="#f2f2f2"/>
<circle cx="15" cy="15" r="4.8" fill="#3f7de0"/>
</svg>
<!-- snowflake app -->
<svg class="a" style="left:201px;top:687px" width="32" height="32" viewBox="0 0 32 32">
<g fill="#0c1a66"><circle cx="16" cy="16" r="5"/><circle cx="16" cy="5.5" r="5"/><circle cx="16" cy="26.5" r="5"/><circle cx="7" cy="11" r="5"/><circle cx="25" cy="11" r="5"/><circle cx="7" cy="21" r="5"/><circle cx="25" cy="21" r="5"/></g>
<g fill="#8ea6f2"><circle cx="16" cy="16" r="3.2"/><circle cx="16" cy="5.5" r="3.4"/><circle cx="16" cy="26.5" r="3.4"/><circle cx="7" cy="11" r="3.4"/><circle cx="25" cy="11" r="3.4"/><circle cx="7" cy="21" r="3.4"/><circle cx="25" cy="21" r="3.4"/></g>
<g fill="#c8d4ff"><circle cx="16" cy="5" r="2"/><circle cx="7" cy="10.5" r="2"/><circle cx="25" cy="10.5" r="2"/></g>
</svg>
<!-- Br -->
<div class="a" style="left:261px;top:688px;width:28px;height:28px;background:#2b1704;border:2px solid #e39a2a;border-radius:2px"></div>
<div class="t" style="left:265px;top:694px;font-size:14px;line-height:15px;font-weight:bold;color:#f0b050">Br</div>
<!-- Ps -->
<div class="a" style="left:319px;top:688px;width:28px;height:28px;background:#061a3c;border:2px solid #7fb8e0;border-radius:2px"></div>
<div class="t" style="left:323px;top:694px;font-size:14px;line-height:15px;font-weight:bold;color:#7ec0f0">Ps</div>
<!-- tray -->
<div class="a" style="left:740px;top:694px;width:29px;height:19px;background:#e8e0d8;border:1px solid #5a4438;border-radius:2px"></div>
<svg class="a" style="left:743px;top:697px" width="24" height="14"><g fill="#8a7a70"><rect x="1" y="1" width="3" height="2"/><rect x="5" y="1" width="3" height="2"/><rect x="9" y="1" width="3" height="2"/><rect x="13" y="1" width="3" height="2"/><rect x="17" y="1" width="3" height="2"/><rect x="1" y="5" width="3" height="2"/><rect x="5" y="5" width="3" height="2"/><rect x="9" y="5" width="3" height="2"/><rect x="13" y="5" width="3" height="2"/><rect x="17" y="5" width="3" height="2"/><rect x="5" y="9" width="12" height="2"/></g></svg>
<svg class="a" style="left:778px;top:694px" width="230" height="22">
<g>
<g transform="translate(2,2)" fill="#7fb0f0"><circle cx="8" cy="9" r="3"/><circle cx="8" cy="3" r="2.5"/><circle cx="8" cy="15" r="2.5"/><circle cx="3" cy="6" r="2.5"/><circle cx="13" cy="6" r="2.5"/><circle cx="3" cy="12" r="2.5"/><circle cx="13" cy="12" r="2.5"/></g>
<path d="M24 14L31 4L38 14L33 17Z" fill="#2a58d0"/>
<circle cx="55" cy="11" r="6" fill="#3a0a0a"/><circle cx="56" cy="12" r="3.5" fill="#d03040"/>
<path d="M72 9Q78 3 84 9Q85 16 78 18Q71 16 72 9Z" fill="#e81818"/>
<rect x="92" y="7" width="16" height="9" rx="4" fill="#eee"/><rect x="96" y="9" width="6" height="5" rx="2" fill="#8a6a5a"/>
<path d="M118 13L124 18L131 9L127 6Z" fill="#3aa83a"/><rect x="117" y="4" width="5" height="5" fill="#e8e8e8"/>
<rect x="139" y="9" width="14" height="9" fill="#eee"/><rect x="142" y="4" width="8" height="5" fill="#ddd"/>
<circle cx="168" cy="11" r="7" fill="#207a40"/><path d="M163 15Q166 6 173 7L171 12Q167 12 165 17Z" fill="#90e070"/>
<ellipse cx="190" cy="11" rx="6" ry="8" fill="#0a1a30"/><path d="M188 6L193 10L189 13L193 16L188 19" fill="none" stroke="#e8e8ff" stroke-width="1.2"/>
<rect x="205" y="3" width="17" height="17" rx="2" fill="#9a8a80" stroke="#d8d0c8"/>
</g></svg>
<svg class="a" style="left:1002px;top:693px" width="170" height="24">
<path d="M3 15Q10 4 20 8L15 18Z" fill="#3aa03a"/>
<rect x="27" y="5" width="15" height="13" rx="2" fill="#0a1830"/><path d="M31 8V12M34 10V13M36 9H39M35 12H40" stroke="#9cc8f0" stroke-width="1.4"/>
<path d="M49 12L60 6V19Z" fill="#c83a2a"/><path d="M52 9L57 16" stroke="#f5a090" stroke-width="1.5"/>
<circle cx="75" cy="9" r="2" fill="#eee"/><rect x="73" y="12" width="4" height="7" fill="#eee"/><rect x="79" y="6" width="7" height="13" rx="2" fill="#e8e4e0"/>
<path d="M94 19L111 6V19Z" fill="#d8ccc4"/>
<path d="M118 8H121L125 5V19L121 16H118Z" fill="#eee"/><path d="M128 8Q131 12 128 16" fill="none" stroke="#bbb" stroke-width="1.2"/>
<path d="M140 4V20" stroke="#eee" stroke-width="1.6"/><path d="M141 5H153L150 9L153 12H141Z" fill="#eee"/>
</svg>
<div class="t" style="left:1170px;top:698px;font-size:10.5px;color:#f0e8e4">ENG</div>
<div class="t" style="left:1219px;top:689px;font-size:10px;color:#f0e8e4">20:29</div>
<div class="t" style="left:1206px;top:705px;font-size:10px;color:#f0e8e4">04.07.2013</div>
<!-- watermark -->
<div class="t" style="left:970px;top:704px;font-size:18px;line-height:20px;font-weight:bold;color:rgba(150,130,120,0.42);letter-spacing:0.3px">inGRAPHIC STOP</div>
<!-- cursor -->
<svg class="a" style="left:884px;top:229px" width="14" height="20"><path d="M1 1V16L5 12L8 18L10.5 17L7.5 11H13Z" fill="#f4f4f4" stroke="#000" stroke-width="1"/></svg>
</div></body></html>
